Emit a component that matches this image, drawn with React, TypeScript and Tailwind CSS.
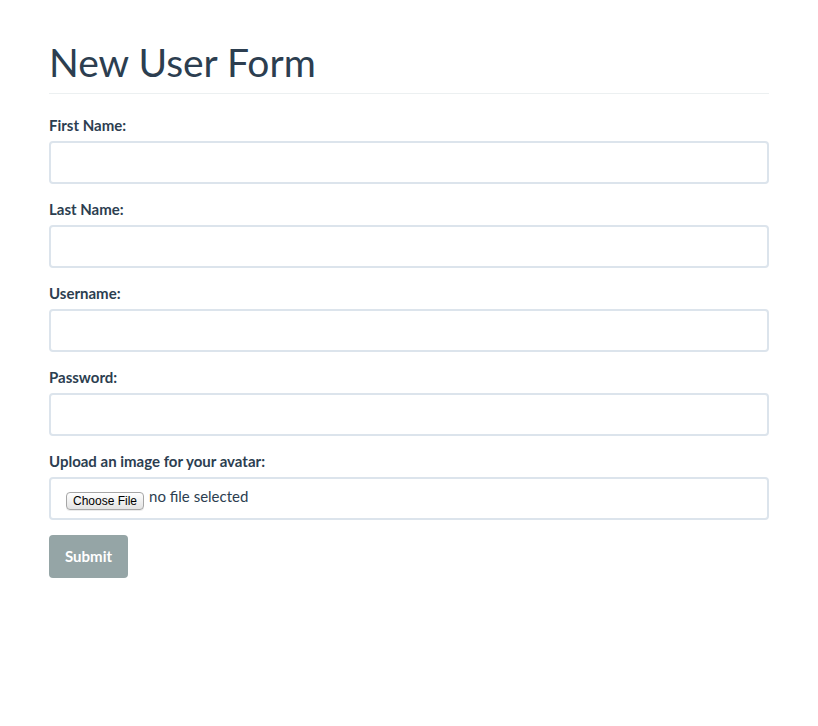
export default function App() {
  return (
    <div className="min-h-screen bg-white font-['Lato','Open_Sans',sans-serif] text-[#2c3e50]">
      <div className="mx-auto w-[750px] px-[15px] pt-[41px]">
        {/* Header */}
        <div className="mb-[21px] border-b border-[#ecf0f1] pb-[9px]">
          <h1 className="text-[39px] leading-[43px] font-normal">New User Form</h1>
        </div>

        <form onSubmit={(e) => e.preventDefault()}>
          <div className="mb-[15px]">
            <label className="mb-[5px] block text-[15px] leading-[21px] font-bold">First Name:</label>
            <input type="text" className="block h-[43px] w-full rounded-[4px] border-2 border-[#dce4ec] px-[15px] text-[15px] outline-none" />
          </div>

          <div className="mb-[15px]">
            <label className="mb-[5px] block text-[15px] leading-[21px] font-bold">Last Name:</label>
            <input type="text" className="block h-[43px] w-full rounded-[4px] border-2 border-[#dce4ec] px-[15px] text-[15px] outline-none" />
          </div>

          <div className="mb-[15px]">
            <label className="mb-[5px] block text-[15px] leading-[21px] font-bold">Username:</label>
            <input type="text" className="block h-[43px] w-full rounded-[4px] border-2 border-[#dce4ec] px-[15px] text-[15px] outline-none" />
          </div>

          <div className="mb-[15px]">
            <label className="mb-[5px] block text-[15px] leading-[21px] font-bold">Password:</label>
            <input type="password" className="block h-[43px] w-full rounded-[4px] border-2 border-[#dce4ec] px-[15px] text-[15px] outline-none" />
          </div>

          <div className="mb-[15px]">
            <label className="mb-[5px] block text-[15px] leading-[21px] font-bold">Upload an image for your avatar:</label>
            <div className="flex h-[43px] w-full items-start rounded-[4px] border-2 border-[#dce4ec] px-[15px] pt-[7px]">
              <span className="mt-[6px] mr-[5px] inline-block h-[18px] rounded-[4px] border border-[#a6a6a6] bg-gradient-to-b from-[#ffffff] to-[#e3e3e3] px-[6px] font-['Liberation_Sans',sans-serif] text-[12px] leading-[16px] text-black shadow-[0_1px_0_rgba(0,0,0,0.08)]">
                Choose File
              </span>
              <span className="text-[15px] leading-[21px]">no file selected</span>
            </div>
          </div>

          <button type="submit" className="h-[43px] rounded-[4px] bg-[#95a5a6] px-[16px] text-[15px] font-bold text-white">
            Submit
          </button>
        </form>
      </div>
    </div>
  );
}
